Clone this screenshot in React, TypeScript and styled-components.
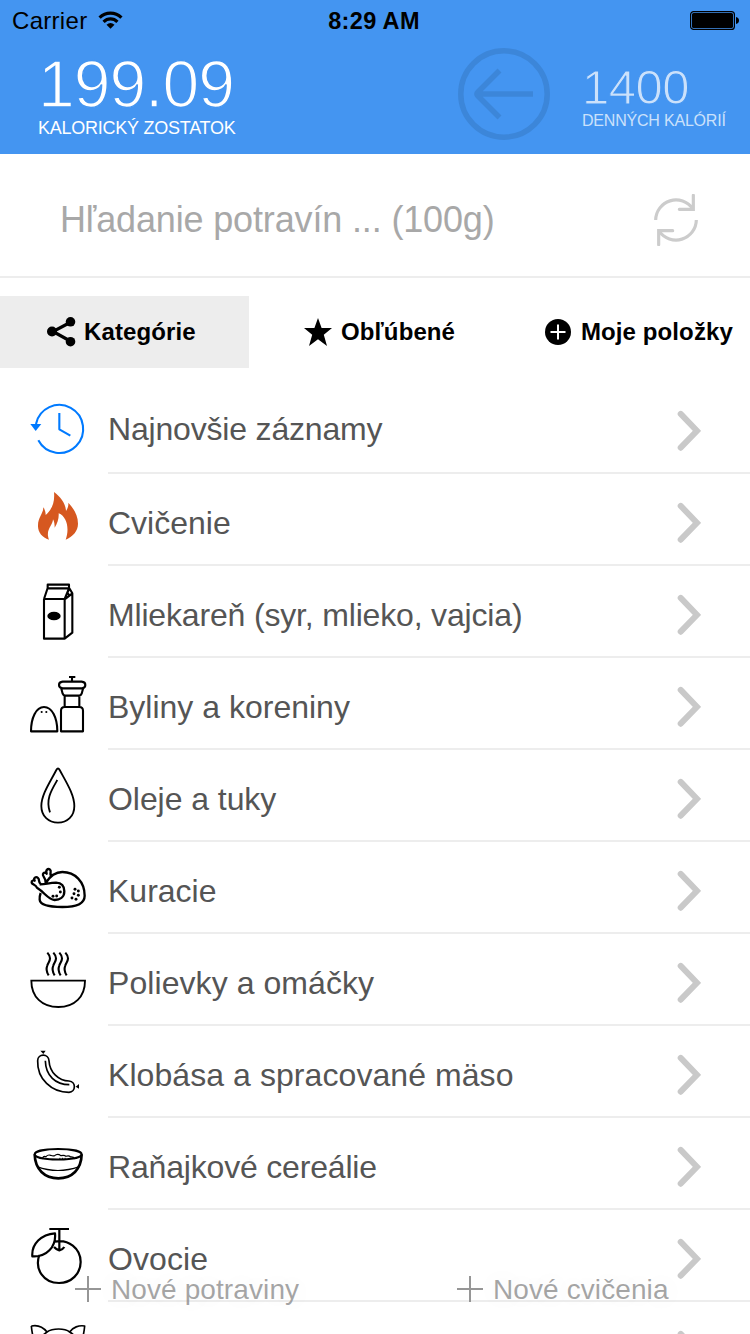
import React from "react";
import styled, { createGlobalStyle } from "styled-components";

const Global = createGlobalStyle`
  * { box-sizing: border-box; }
  html, body { margin: 0; padding: 0; background: #fff; overflow: hidden; }
  body { font-family: "Liberation Sans", Arial, sans-serif; }
  svg { display: block; flex: none; }
`;

const Screen = styled.main`
  position: relative;
  width: 750px;
  height: 1334px;
  overflow: hidden;
  background: #fff;
`;

const Header = styled.header`
  height: 154px;
  background: #4495f1;
`;

const StatusBar = styled.div`
  display: grid;
  grid-template-columns: 1fr auto 1fr;
  align-items: center;
  height: 40px;
  padding: 1px 11px 0 12px;
  font-size: 24px;
  line-height: 38px;
  color: #000;
`;

const Carrier = styled.div`
  display: flex;
  align-items: center;
  gap: 11px;
  letter-spacing: 0.3px;
`;

const Clock = styled.div`
  margin-right: 3px;
  font-weight: 700;
  font-size: 23.5px;
  letter-spacing: 0.35px;
`;

const BatterySlot = styled.div`
  display: flex;
  justify-content: flex-end;
`;

const Summary = styled.div`
  display: flex;
  height: 114px;
`;

const Balance = styled.div`
  width: 420px;
  padding: 8px 0 0 38px;
  color: #fff;
`;

const Goal = styled.div`
  padding: 21px 0 0 32px;
  color: #cbe1fb;
`;

const Figure = styled.div<{ $size: number; $height: number; $thin: number; $track: number }>`
  font-size: ${(p) => p.$size}px;
  line-height: ${(p) => p.$height}px;
  letter-spacing: ${(p) => p.$track}px;
  -webkit-text-stroke: ${(p) => p.$thin}px #4495f1;
  white-space: nowrap;
`;

const Caption = styled.div<{ $size: number; $track: number }>`
  margin-top: -2px;
  font-size: ${(p) => p.$size}px;
  line-height: 20px;
  letter-spacing: ${(p) => p.$track}px;
  white-space: nowrap;
`;

const BackButton = styled.div`
  width: 130px;
  padding: 8px 0 0 38px;
`;

const SearchBar = styled.div`
  display: flex;
  align-items: center;
  justify-content: space-between;
  height: 124px;
  padding: 10px 50px 0 60px;
  border-bottom: 2px solid #ededed;
  font-size: 36px;
  letter-spacing: -0.15px;
  color: #a8a8a8;
`;

const Tabs = styled.nav`
  display: flex;
  height: 72px;
  margin-top: 18px;
`;

const Tab = styled.div<{ $active?: boolean; $width: number; $pad: number; $gap: number }>`
  display: flex;
  align-items: center;
  width: ${(p) => p.$width}px;
  padding-left: ${(p) => p.$pad}px;
  gap: ${(p) => p.$gap}px;
  background: ${(p) => (p.$active ? "#ededed" : "transparent")};
  font-size: 24px;
  font-weight: 700;
  letter-spacing: 0.1px;
  white-space: nowrap;
  color: #000;
`;

const List = styled.div`
  padding-top: 14px;
`;

const Row = styled.div`
  display: flex;
  height: 92px;
  padding-left: 28px;
`;

const RowBody = styled.div`
  display: flex;
  flex: 1;
  align-items: center;
  justify-content: space-between;
  margin-left: 20px;
  padding: 8px 49px 0 0;
  border-bottom: 2px solid #ededed;
`;

const Label = styled.span<{ $track: number; $lift: number }>`
  margin-bottom: ${(p) => p.$lift * 2}px;
  font-size: 32px;
  line-height: 40px;
  letter-spacing: ${(p) => p.$track}px;
  color: #555;
  white-space: nowrap;
`;

const FloatingAction = styled.div<{ $left: number }>`
  position: absolute;
  top: 1271px;
  left: ${(p) => p.$left}px;
  display: flex;
  align-items: flex-start;
  gap: 10px;
  font-size: 28px;
  line-height: 38px;
  letter-spacing: 0.1px;
  color: rgba(140, 140, 140, 0.78);
  text-shadow: 0 0 22px rgba(0, 0, 0, 0.08);
  white-space: nowrap;

  svg {
    margin-top: 5px;
  }
`;

const Chevron = () => (
  <svg width="24" height="42" viewBox="0 0 24 42" fill="none" stroke="#c9c9c9" strokeWidth="6" strokeLinecap="round">
    <path d="M3.7 3.9 20 20.8 3.7 37.7" strokeLinejoin="miter" />
  </svg>
);

const Plus = () => (
  <svg width="26" height="26" viewBox="0 0 26 26" stroke="#969696" strokeWidth="2">
    <path d="M13 0v26M0 13h26" />
  </svg>
);

type Item = {
  label: string;
  top: number;
  track?: number;
  lift?: number;
  color?: string;
  art: React.ReactNode;
};

const items: Item[] = [
  {
    label: "Najnovšie záznamy",
    top: -24,
    track: -0.18,
    lift: 2,
    color: "#007aff",
    art: (
      <>
        <path d="M48 102A71.5 72 0 1 1 55 151M118 69V118L151 137" />
        <path d="M31 102H64L47 123Z" fill="#007aff" stroke="none" />
      </>
    ),
  },
  {
    label: "Cvičenie",
    top: 252,
    art: (
      <path
        d="M102 306C121 320 137 340 138 363C143 356 146 347 145 338C160 354 174 375 174 401C174 423 158 440 137 449C148 420 143 381 116 370C117 385 113 399 104 413C104 403 103 394 99 388C99 403 81 417 84 438Q85 445 87 449C66 443 53 425 54 406C54 382 70 371 70 352C75 359 77 367 77 375C95 359 105 338 102 306Z"
        fill="#d65820"
        stroke="none"
      />
    ),
  },
  {
    label: "Mliekareň (syr, mlieko, vajcia)",
    top: -12,
    track: -0.17,
    art: (
      <>
        <path d="M72 87H134V206H72ZM83 54 72 87M83 44H147V55H83ZM147 55 134 87M148 55 157 70 134 88M157 70V188L134 206M148 56 142 68 148 76" />
        <ellipse cx="102" cy="138" rx="20" ry="13" fill="#000" stroke="none" />
      </>
    ),
  },
  {
    label: "Byliny a koreniny",
    top: 264,
    art: (
      <>
        <path d="M33 484H112C112 443 96 411 72 411C48 411 33 444 33 484ZM123 484H189V422Q189 411 178 411H134Q123 411 123 422ZM134 411V377M178 411V377M124 356 128 371Q130 377 136 377H177Q183 377 185 371L189 356M128 335H185Q196 336 196 345T186 355H128Q117 354 117 345T128 335ZM156 335V322M147 321H166" />
        <circle cx="65" cy="426" r="3.2" fill="#000" stroke="none" />
        <circle cx="79" cy="426" r="3.2" fill="#000" stroke="none" />
      </>
    ),
  },
  {
    label: "Oleje a tuky",
    top: -30,
    track: -0.06,
    art: (
      <path
        strokeWidth="5.5"
        d="M109 30Q114 21 119 30C139 67 163 104 163 138C163 169 142 188 114 188S64 169 64 138C64 104 90 67 109 30ZM112 60C94 91 76 119 90 157"
      />
    ),
  },
  {
    label: "Kuracie",
    top: 246,
    art: (
      <>
        <path
          strokeWidth="7"
          d="M77 369C91 347 106 336 127 336C165 336 194 365 194 407C194 431 167 441 127 441C84 441 60 435 59 419Q58 410 62 399M59 373C75 374 87 368 108 368C126 369 133 381 133 394C133 412 119 420 104 420C82 417 75 398 52 384M52 385C47 372 37 375 35 368C34 361 42 360 44 362C39 354 48 348 54 354C61 361 52 366 64 374M77 369C78 351 66 350 69 342C71 336 78 338 80 341C76 330 84 324 90 329C97 336 85 343 96 350"
        />
        <g fill="#000" stroke="none">
          {[[118, 382], [121, 396], [110, 408], [99, 409], [165, 388], [175, 393], [162, 401], [175, 406], [156, 414], [168, 418]].map(([x, y]) => (
            <circle key={`${x}-${y}`} cx={x} cy={y} r="4.4" />
          ))}
        </g>
      </>
    ),
  },
  {
    label: "Polievky a omáčky",
    top: -18,
    track: 0.07,
    art: (
      <>
        <path strokeWidth="5.6" d="M34 122H195C195 170 164 201 115 201S34 170 34 122Z" strokeLinejoin="miter" />
        {[0, 18, 36, 54].map((dx) => (
          <path key={dx} transform={`translate(${dx} 0)`} d="M82 38C98 56 86 64 82 76Q76 91 86 106" />
        ))}
      </>
    ),
  },
  {
    label: "Klobása a spracované mäso",
    top: 258,
    track: 0.07,
    art: (
      <>
        <path
          strokeWidth="5"
          d="M53 362C53 340 86 340 87 362C89 397 116 423 147 423C169 425 168 456 147 457C95 457 51 417 53 362ZM76 362C77 407 107 434 148 434"
        />
        <path d="M61 332H77L70 342ZM177 432V446L167 440Z" fill="#000" stroke="none" />
      </>
    ),
  },
  {
    label: "Raňajkové cereálie",
    top: -36,
    track: -0.18,
    art: (
      <>
        <path strokeWidth="6" d="M44 73C44 52 185 52 185 73S44 94 44 73Z" />
        <path strokeWidth="8" d="M44 73C45 118 74 145 115 145S184 118 185 73" />
        <path strokeWidth="3.5" d="M51 110Q113 133 178 110M67 87Q70 76 78 80Q84 73 92 76Q99 79 104 77Q112 69 123 77Q133 74 138 79Q146 75 152 81Q161 80 164 87" />
        <path strokeWidth="3" strokeDasharray="3 5" d="M118 85H142" />
      </>
    ),
  },
  {
    label: "Ovocie",
    top: 240,
    track: 0.1,
    art: (
      <path
        strokeWidth="6.6"
        d="M58 375C43 418 71 459 117 459C154 459 182 431 182 396C182 356 145 326 104 335M88 297H147M118 297V360M102 351Q108 358 118 361Q129 358 133 351M105 310C64 313 34 342 37 379C79 382 109 351 105 310Z"
      />
    ),
  },
  {
    label: "",
    top: 516,
    art: (
      <path
        strokeWidth="5"
        d="M34 588C36 610 40 631 50 645M34 588C53 584 70 592 81 606C98 594 134 594 149 606C158 592 177 585 194 588C192 611 187 631 178 645M81 606C70 614 62 620 58 628M149 606C160 613 168 621 172 628"
      />
    ),
  },
];

export default function App() {
  return (
    <>
      <Global />
      <Screen>
        <Header>
          <StatusBar>
            <Carrier>
              Carrier
              <svg width="25" height="19" viewBox="0 0 26 20" fill="none" stroke="#000" strokeWidth="3.4">
                <path d="M1.5 7C8 .6 18 .6 24.5 7M5.7 11.4C10 7.3 16 7.3 20.3 11.4" />
                <path d="M8.8 14.5Q13 10.9 17.2 14.5L13 18.7Z" fill="#000" stroke="none" />
              </svg>
            </Carrier>
            <Clock>8:29 AM</Clock>
            <BatterySlot>
              <svg width="49" height="19" viewBox="0 0 49 19">
                <rect x=".6" y=".6" width="43.8" height="17.8" rx="3" fill="none" stroke="#000" strokeWidth="1.2" />
                <rect x="2" y="2" width="41" height="15" rx="1.6" />
                <path d="M46 6q3 .8 3 3.5T46 13Z" />
              </svg>
            </BatterySlot>
          </StatusBar>
          <Summary>
            <Balance>
              <Figure $size={66} $height={72} $thin={1.5} $track={-1}>199.09</Figure>
              <Caption $size={18} $track={-0.25}>KALORICKÝ ZOSTATOK</Caption>
            </Balance>
            <BackButton>
              <svg width="92" height="92" viewBox="0 0 92 92" fill="none" stroke="#3c86d9" strokeWidth="5.5">
                <circle cx="46" cy="46" r="43.2" />
                <path d="M41.5 22.5 20 44Q18 46 20 48L41.5 69.5M19 46H75" />
              </svg>
            </BackButton>
            <Goal>
              <Figure $size={49} $height={52} $thin={1.1} $track={-0.5}>1400</Figure>
              <Caption $size={16} $track={-0.2}>DENNÝCH KALÓRIÍ</Caption>
            </Goal>
          </Summary>
        </Header>
        <SearchBar>
          <span>Hľadanie potravín ... (100g)</span>
          <svg
            width="48"
            height="52"
            viewBox="36 42 144 156"
            fill="none"
            stroke="#ccc"
            strokeWidth="9.5"
          >
            <path d="M47 120A61 61 0 0 1 158 86M169 120A61 61 0 0 1 58 154" />
            <path d="M160 46V88H118M56 194V152H98" strokeLinecap="round" />
          </svg>
        </SearchBar>
        <Tabs>
          <Tab $active $width={249} $pad={47} $gap={8}>
            <svg width="29" height="30" viewBox="0 0 29 30">
              <path d="M24 5 6 14.5l18 10" fill="none" stroke="#000" strokeWidth="3.2" />
              <circle cx="5" cy="14.5" r="5" />
              <circle cx="23.5" cy="4.8" r="4.8" />
              <circle cx="23.5" cy="24.7" r="4.8" />
            </svg>
            Kategórie
          </Tab>
          <Tab $width={295} $pad={55} $gap={9}>
            <svg width="28" height="28" viewBox="0 0 28 28">
              <path d="M14 0 17.6 10H28L19.8 16.7 23 28 14 21.3 5 28 8.2 16.7 0 10H10.4Z" />
            </svg>
            Obľúbené
          </Tab>
          <Tab $width={206} $pad={1} $gap={10}>
            <svg width="26" height="26" viewBox="0 0 26 26">
              <circle cx="13" cy="13" r="13" />
              <path d="M13 5.5v15M5.5 13h15" stroke="#fff" strokeWidth="2" />
            </svg>
            Moje položky
          </Tab>
        </Tabs>
        <List>
          {items.map((item) => (
            <Row key={item.top}>
              <svg
                width="60"
                height="92"
                viewBox={`24 ${item.top} 180 276`}
                fill="none"
                stroke={item.color ?? "#000"}
                strokeWidth="6.3"
                strokeLinejoin="round"
              >
                {item.art}
              </svg>
              <RowBody>
                <Label $track={item.track ?? 0} $lift={item.lift ?? 0}>
                  {item.label}
                </Label>
                <Chevron />
              </RowBody>
            </Row>
          ))}
        </List>
        <FloatingAction $left={75}>
          <Plus />
          <span>Nové potraviny</span>
        </FloatingAction>
        <FloatingAction $left={457}>
          <Plus />
          <span>Nové cvičenia</span>
        </FloatingAction>
      </Screen>
    </>
  );
}
